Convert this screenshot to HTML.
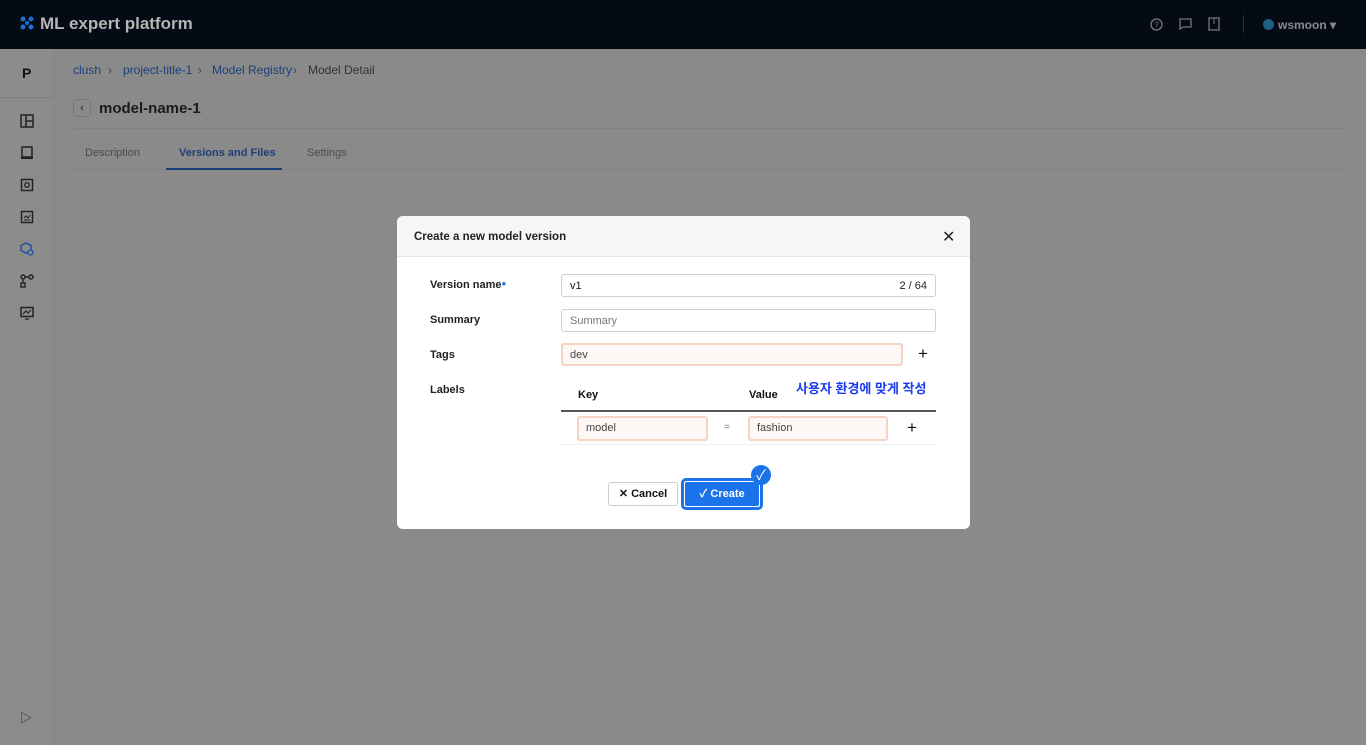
<!DOCTYPE html>
<html><head><meta charset="utf-8">
<style>
*{box-sizing:border-box;margin:0;padding:0}
body{width:1366px;height:745px;overflow:hidden;font-family:"Liberation Sans","Noto Sans CJK KR",sans-serif;background:#8a8a8a;position:relative;color:#111}
.hdr{position:absolute;left:0;top:0;width:1366px;height:49px;background:#050b14}
.side{position:absolute;left:0;top:49px;width:54px;height:696px;background:#8c8c8c;border-right:1px solid #848484}
.a{position:absolute}
.ic{position:absolute;left:20px;width:14px;height:14px}
.crumb{font-size:12px;color:#1c3f7a;top:63px}
.modal{position:absolute;left:397px;top:216px;width:573px;height:313px;background:#fff;border-radius:6px;overflow:hidden}
.mh{height:41px;background:#f6f6f6;border-bottom:1px solid #e6e6e6}
.lab{position:absolute;left:33px;font-size:11px;font-weight:bold;color:#222}
.inp{position:absolute;height:23px;border:1px solid #cfcfcf;border-radius:3px;font-size:11px;padding:5px 8px;color:#222;background:#fff}
.hl{border:2px solid #f6d3c2;background:#fdf8f5;padding:4px 7px;color:#444}
</style></head><body>
<div class="hdr">
  <svg class="a" style="left:20px;top:16px" width="14" height="14" viewBox="0 0 14 14"><g fill="#1f6fd0"><circle cx="3" cy="3" r="2.5"/><circle cx="11" cy="3" r="2.5"/><circle cx="3" cy="11" r="2.5"/><circle cx="11" cy="11" r="2.5"/><circle cx="7" cy="7" r="2"/></g></svg>
  <div class="a" style="left:40px;top:14px;font-size:17px;font-weight:bold;color:#b5b5b5">ML expert platform</div>
  <svg class="a" style="left:1150px;top:18px" width="13" height="13" viewBox="0 0 13 13"><circle cx="6.5" cy="6.5" r="5.5" fill="none" stroke="#777" stroke-width="1.3"/><text x="6.5" y="9.5" font-size="8" text-anchor="middle" fill="#777" font-family="Liberation Sans">?</text></svg>
  <svg class="a" style="left:1179px;top:18px" width="13" height="12" viewBox="0 0 13 12"><path d="M1 1h11v8H4l-3 2z" fill="none" stroke="#777" stroke-width="1.3"/></svg>
  <svg class="a" style="left:1208px;top:17px" width="12" height="14" viewBox="0 0 12 14"><rect x="1" y="1" width="10" height="12" fill="none" stroke="#777" stroke-width="1.3"/><path d="M6 1v6" stroke="#777"/></svg>
  <div class="a" style="left:1243px;top:15px;width:1px;height:18px;background:#2a2f38"></div>
  <div class="a" style="left:1263px;top:19px;width:11px;height:11px;border-radius:50%;background:#1d5f85"></div>
  <div class="a" style="left:1278px;top:18px;font-size:12px;font-weight:bold;color:#8a8a8a">wsmoon ▾</div>
</div>
<div class="side">
  <div class="a" style="left:22px;top:16px;font-size:14px;font-weight:bold">P</div>
  <div class="a" style="left:0;top:48px;width:53px;height:1px;background:#7f7f7f"></div>
  <svg class="ic" style="top:65px" viewBox="0 0 14 14"><rect x="1" y="1" width="12" height="12" fill="none" stroke="#222" stroke-width="1.5"/><path d="M6 1v12M6 7h7" stroke="#222" stroke-width="1.5"/></svg>
  <svg class="ic" style="top:97px" viewBox="0 0 14 14"><rect x="2" y="1" width="10" height="10" fill="none" stroke="#222" stroke-width="1.5"/><path d="M1 12h12" stroke="#222" stroke-width="2"/></svg>
  <svg class="ic" style="top:129px" viewBox="0 0 14 14"><rect x="1.5" y="1.5" width="11" height="11" fill="none" stroke="#222" stroke-width="1.5"/><circle cx="7" cy="7" r="2.3" fill="none" stroke="#222" stroke-width="1.3"/></svg>
  <svg class="ic" style="top:161px" viewBox="0 0 14 14"><rect x="1.5" y="1.5" width="11" height="11" fill="none" stroke="#222" stroke-width="1.5"/><path d="M4 8l2-2 2 2 2-3M4 10h6" fill="none" stroke="#222"/></svg>
  <svg class="ic" style="top:193px" viewBox="0 0 14 14"><path d="M6 1l5 2.5v5L6 11 1 8.5v-5z" fill="none" stroke="#1b53a0" stroke-width="1.5"/><circle cx="10.5" cy="10.5" r="2.5" fill="#8c8c8c" stroke="#1b53a0" stroke-width="1.3"/></svg>
  <svg class="ic" style="top:225px" viewBox="0 0 14 14"><circle cx="3" cy="3" r="2" fill="none" stroke="#222" stroke-width="1.4"/><circle cx="11" cy="3" r="2" fill="none" stroke="#222" stroke-width="1.4"/><rect x="1" y="9" width="4" height="4" fill="none" stroke="#222" stroke-width="1.4"/><path d="M5 3h4M3 5v4" stroke="#222" stroke-width="1.4"/></svg>
  <svg class="ic" style="top:257px" viewBox="0 0 14 14"><rect x="1" y="1.5" width="12" height="9" fill="none" stroke="#222" stroke-width="1.5"/><path d="M3 8l3-3 2 2 3-3M5 13h4" fill="none" stroke="#222" stroke-width="1.2"/></svg>
  <div class="a" style="left:20px;top:660px;font-size:12px;color:#222">▷</div>
</div>
<div class="a crumb" style="left:73px">clush</div>
<div class="a crumb" style="left:108px;color:#444">›</div>
<div class="a crumb" style="left:123px">project-title-1</div>
<div class="a crumb" style="left:198px;color:#444">›</div>
<div class="a crumb" style="left:212px">Model Registry</div>
<div class="a crumb" style="left:293px;color:#444">›</div>
<div class="a crumb" style="left:308px;color:#333">Model Detail</div>
<div class="a" style="left:73px;top:99px;width:18px;height:18px;border:1px solid #777;border-radius:3px;font-size:11px;text-align:center;line-height:16px;color:#222">‹</div>
<div class="a" style="left:99px;top:100px;font-size:15px;font-weight:bold;color:#1a1a1a">model-name-1</div>
<div class="a" style="left:73px;top:128px;width:1273px;height:1px;background:#828282"></div>
<div class="a" style="left:85px;top:147px;font-size:11px;color:#4a4a4a">Description</div>
<div class="a" style="left:179px;top:147px;font-size:11px;font-weight:bold;color:#1c3f7a">Versions and Files</div>
<div class="a" style="left:307px;top:147px;font-size:11px;color:#4a4a4a">Settings</div>
<div class="a" style="left:73px;top:169px;width:1273px;height:1px;background:#828282"></div>
<div class="a" style="left:166px;top:168px;width:116px;height:2px;background:#1c3f7a"></div>

<div class="modal">
  <div class="mh"><div class="a" style="left:17px;top:15px;font-size:11.5px;font-weight:bold;color:#222">Create a new model version</div>
  <div class="a" style="left:545px;top:11px;font-size:16px;color:#222">✕</div></div>
  <div class="lab" style="top:63px">Version name<span style="color:#1a73e8;font-size:8px;vertical-align:top">●</span></div>
  <div class="inp" style="left:164px;top:58px;width:375px">v1<span style="float:right">2 / 64</span></div>
  <div class="lab" style="top:98px">Summary</div>
  <div class="inp" style="left:164px;top:93px;width:375px;color:#777">Summary</div>
  <div class="lab" style="top:133px">Tags</div>
  <div class="inp hl" style="left:164px;top:127px;width:342px">dev</div>
  <div class="a" style="left:514px;top:127px;width:24px;height:24px;text-align:center;font-size:17px;line-height:22px">+</div>
  <div class="lab" style="top:168px">Labels</div>
  <div class="a" style="left:164px;top:194px;width:375px;height:2px;background:#555"></div>
  <div class="a" style="left:181px;top:173px;font-size:11px;font-weight:bold">Key</div>
  <div class="a" style="left:352px;top:173px;font-size:11px;font-weight:bold">Value</div>
  <div class="a" style="left:399px;top:162px;font-size:13px;font-weight:bold;color:#1a3cf0">사용자 환경에 맞게 작성</div>
  <div class="inp hl" style="left:180px;top:200px;width:131px;height:25px">model</div>
  <div class="a" style="left:327px;top:206px;font-size:10px;color:#777">=</div>
  <div class="inp hl" style="left:351px;top:200px;width:140px;height:25px">fashion</div>
  <div class="a" style="left:510px;top:202px;font-size:17px">+</div>
  <div class="a" style="left:164px;top:228px;width:375px;height:1px;background:#eee"></div>
  <div class="a" style="left:211px;top:266px;width:70px;height:24px;border:1px solid #ccc;border-radius:3px;font-size:11px;font-weight:bold;text-align:center;line-height:22px">✕ Cancel</div>
  <div class="a" style="left:284px;top:262px;width:82px;height:32px;border:3px solid #1a73e8;border-radius:5px;background:#fff"></div>
  <div class="a" style="left:288px;top:266px;width:74px;height:24px;background:#1a73e8;border-radius:2px;color:#fff;font-size:11px;font-weight:bold;text-align:center;line-height:24px">✓ Create</div>
  <div class="a" style="left:354px;top:249px;width:20px;height:20px;border-radius:50%;background:#1a73e8;color:#fff;font-size:14px;text-align:center;line-height:20px">✓</div>
</div>
</body></html>
